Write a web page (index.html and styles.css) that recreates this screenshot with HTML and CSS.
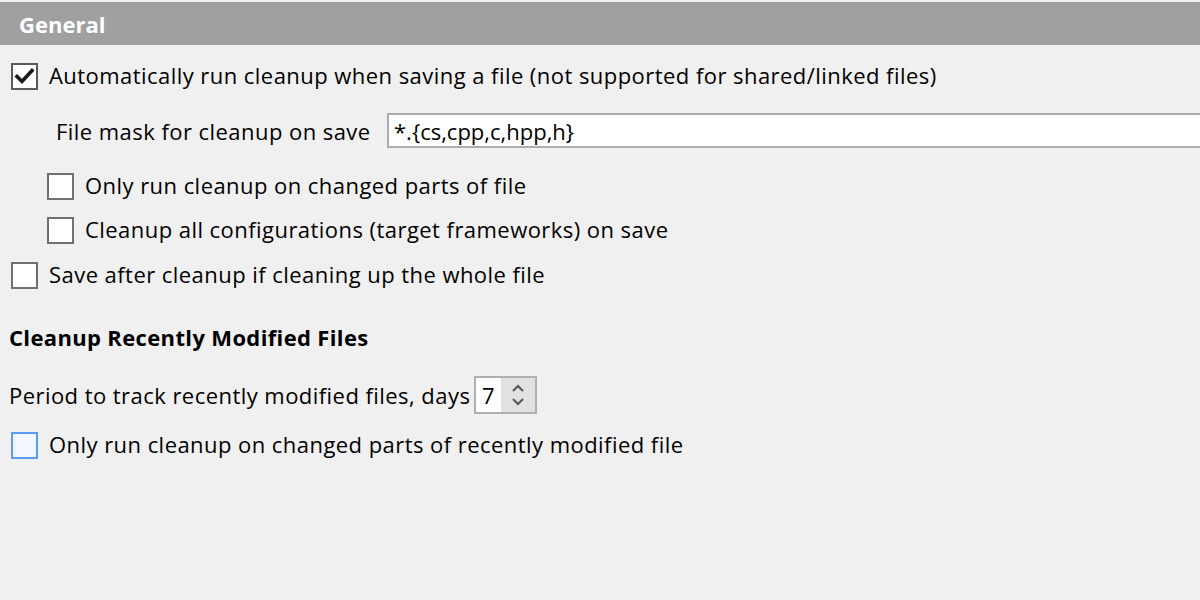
FILE: index.html
```html
<!DOCTYPE html>
<html>
<head>
<meta charset="utf-8">
<link rel="stylesheet" href="styles.css">
</head>
<body>
<div class="page">
  <div class="header">General</div>

  <div class="row row1">
    <span class="cb checked"><svg viewBox="0 0 23 23" width="23" height="23"><path d="M4 11.5 L9 16.5 L19 5.5" fill="none" stroke="#1a1a1a" stroke-width="3.6" stroke-linecap="square"/></svg></span>
    <span class="label">Automatically run cleanup when saving a file (not supported for shared/linked files)</span>
  </div>

  <div class="mask-row">
    <span class="mask-label">File mask for cleanup on save</span>
    <div class="textbox">*.{cs,cpp,c,hpp,h}</div>
  </div>

  <div class="row row3 indent">
    <span class="cb"></span>
    <span class="label">Only run cleanup on changed parts of file</span>
  </div>

  <div class="row indent">
    <span class="cb"></span>
    <span class="label">Cleanup all configurations (target frameworks) on save</span>
  </div>

  <div class="row row5">
    <span class="cb"></span>
    <span class="label">Save after cleanup if cleaning up the whole file</span>
  </div>

  <div class="section">Cleanup Recently Modified Files</div>

  <div class="period-row">
    <span class="period-label">Period to track recently modified files, days</span>
    <div class="spinner">
      <div class="spin-value">7</div>
      <div class="spin-buttons">
        <svg viewBox="0 0 14 9" width="14" height="9"><path d="M2 7 L7 2 L12 7" fill="none" stroke="#555" stroke-width="2"/></svg>
        <svg viewBox="0 0 14 9" width="14" height="9"><path d="M2 2 L7 7 L12 2" fill="none" stroke="#555" stroke-width="2"/></svg>
      </div>
    </div>
  </div>

  <div class="row row-last">
    <span class="cb focus"></span>
    <span class="label">Only run cleanup on changed parts of recently modified file</span>
  </div>
</div>
</body>
</html>
```

FILE: styles.css
```css
html, body {
  margin: 0;
  padding: 0;
  background: #f0f0f0;
}
.page {
  width: 1200px;
  height: 600px;
  overflow: hidden;
  font-family: "Open Sans", "Noto Sans", sans-serif;
  font-size: 22px;
  letter-spacing: 0.45px;
  color: #000;
}
.header {
  margin-top: 2px;
  height: 43px;
  background: #a0a0a0;
  color: #fff;
  font-weight: bold;
  letter-spacing: 0;
  padding-left: 19px;
  display: flex;
  align-items: center;
}
.row {
  display: flex;
  align-items: center;
  height: 44px;
  padding-left: 11px;
}
.row1 { margin-top: 9px; }
.row3 { margin-top: 16px; }
.row5 { margin-top: 1px; }
.row-last { margin-top: 9px; }
.indent { padding-left: 47px; }
.cb {
  box-sizing: border-box;
  width: 27px;
  height: 27px;
  border: 2px solid #707070;
  background: #fff;
  display: flex;
  align-items: center;
  justify-content: center;
  flex: none;
}
.cb.checked { border-color: #5a5a5a; }
.cb.focus { border-color: #5d9cf4; background: #f2f7ff; }
.label { margin-left: 11px; margin-bottom: 2px; white-space: nowrap; }
.mask-row {
  display: flex;
  align-items: center;
  margin-top: 15px;
  height: 35px;
  padding-left: 56px;
}
.mask-label { width: 331px; white-space: nowrap; }
.textbox {
  box-sizing: border-box;
  flex: 1;
  height: 35px;
  border: 2px solid #adadad;
  border-right: none;
  background: #fff;
  padding-left: 5px;
  letter-spacing: 0;
  display: flex;
  align-items: center;
  white-space: nowrap;
}
.section {
  margin-top: 25px;
  height: 30px;
  padding-left: 9px;
  font-weight: bold;
  letter-spacing: 0.35px;
  display: flex;
  align-items: center;
}
.period-row {
  display: flex;
  align-items: center;
  margin-top: 24px;
  height: 38px;
  padding-left: 9px;
}
.period-label { width: 465px; white-space: nowrap; }
.spinner {
  box-sizing: border-box;
  width: 63px;
  height: 38px;
  border: 2px solid #b0b0b0;
  display: flex;
}
.spin-value {
  width: 25px;
  background: #fff;
  display: flex;
  align-items: center;
  justify-content: center;
}
.spin-buttons {
  flex: 1;
  background: #e1e1e1;
  display: flex;
  flex-direction: column;
  align-items: center;
  justify-content: center;
  gap: 4px;
}
```
